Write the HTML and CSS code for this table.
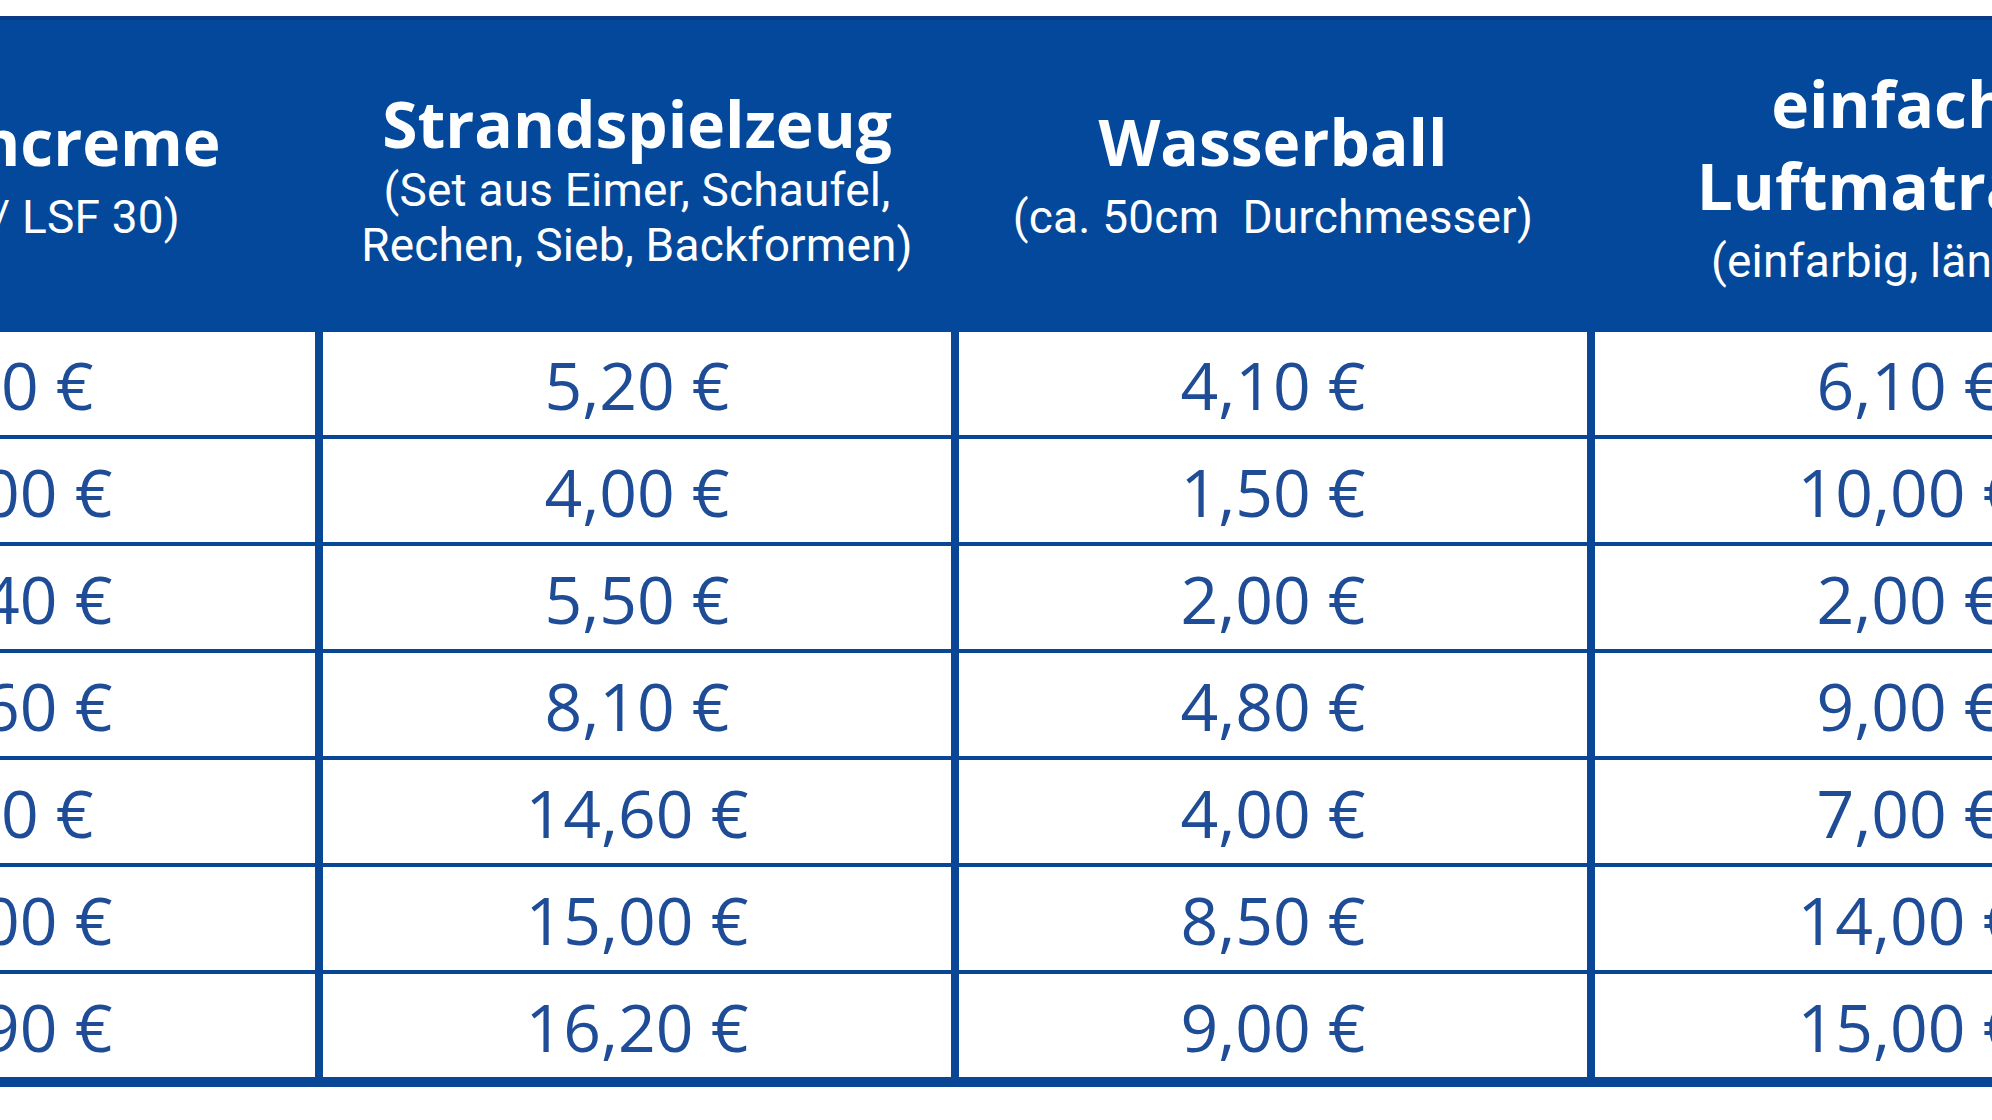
FILE: index.html
```html
<!DOCTYPE html>
<html lang="de">
<head>
<meta charset="utf-8">
<title>Preisvergleich Strandartikel</title>
<link rel="stylesheet" href="styles.css">
</head>
<body>
<div class="page">
  <div class="price-table">
    <div class="head">
      <div class="th">
        <div class="title">Sonnencreme</div>
        <div class="sub">(200 ml / LSF 30)</div>
      </div>
      <div class="th th--two-line-sub">
        <div class="title">Strandspielzeug</div>
        <div class="sub">(Set aus Eimer, Schaufel,<br>Rechen, Sieb, Backformen)</div>
      </div>
      <div class="th">
        <div class="title">Wasserball</div>
        <div class="sub">(ca. 50cm&nbsp; Durchmesser)</div>
      </div>
      <div class="th th--two-line-title">
        <div class="title">einfache<br>Luftmatratze</div>
        <div class="sub">(einfarbig, länglich)</div>
      </div>
    </div>
    <div class="body">
      <div class="td">4,10 €</div><div class="td">5,20 €</div><div class="td">4,10 €</div><div class="td">6,10 €</div>
      <div class="td">10,00 €</div><div class="td">4,00 €</div><div class="td">1,50 €</div><div class="td">10,00 €</div>
      <div class="td">12,40 €</div><div class="td">5,50 €</div><div class="td">2,00 €</div><div class="td">2,00 €</div>
      <div class="td">13,60 €</div><div class="td">8,10 €</div><div class="td">4,80 €</div><div class="td">9,00 €</div>
      <div class="td">7,10 €</div><div class="td">14,60 €</div><div class="td">4,00 €</div><div class="td">7,00 €</div>
      <div class="td">18,00 €</div><div class="td">15,00 €</div><div class="td">8,50 €</div><div class="td">14,00 €</div>
      <div class="td">19,90 €</div><div class="td">16,20 €</div><div class="td">9,00 €</div><div class="td">15,00 €</div>
    </div>
  </div>
</div>
</body>
</html>
```

FILE: styles.css
```css
html, body {
  margin: 0;
  padding: 0;
  background: #ffffff;
  overflow: hidden;
}

.page {
  width: 1992px;
  height: 1120px;
  overflow: hidden;
  padding-top: 16px;
  box-sizing: border-box;
  font-family: "Open Sans", "Liberation Sans", sans-serif;
}

.price-table {
  margin-left: -313px;
  width: 2536px;
}

.head {
  display: grid;
  grid-template-columns: repeat(4, 628px);
  column-gap: 8px;
  height: 316px;
  box-sizing: border-box;
  border-top: 4px solid #0b3a86;
  padding-bottom: 6px;
  background: #03489a;
}

.th {
  display: flex;
  flex-direction: column;
  justify-content: center;
  align-items: center;
  text-align: center;
  color: #ffffff;
}

.title {
  font-family: "Open Sans", "Liberation Sans", sans-serif;
  font-weight: 700;
  font-size: 64px;
  line-height: 82px;
}

.sub {
  font-family: Roboto, "Liberation Sans", sans-serif;
  font-weight: 400;
  font-size: 46px;
  line-height: 55px;
  margin-top: 7px;
  letter-spacing: 0.2px;
}

.th--two-line-sub .title {
  margin-top: 9px;
  margin-bottom: -9px;
}

.th--two-line-title {
  padding-top: 5px;
}

.body {
  display: grid;
  grid-template-columns: repeat(4, 628px);
  gap: 4px 8px;
  padding-bottom: 10px;
  background: #0a4696;
}

.td {
  height: 103px;
  display: flex;
  align-items: center;
  justify-content: center;
  background: #ffffff;
  color: #1e4c96;
  font-size: 66px;
  font-weight: 400;
  line-height: 1;
}
```
